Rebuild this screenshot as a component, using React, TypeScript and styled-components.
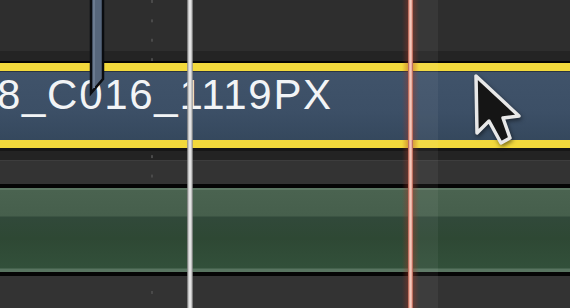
import React from "react";
import styled, { createGlobalStyle } from "styled-components";

const Global = createGlobalStyle`
  html, body { margin: 0; padding: 0; background: #2e2e2e; }
  body { font-family: "Liberation Sans", Arial, sans-serif; }
`;

const Timeline = styled.div`
  position: relative;
  width: 570px;
  height: 308px;
  overflow: hidden;
  display: flex;
  flex-direction: column;
  background: #2e2e2e;
`;

const Track = styled.div<{ $h: number; $bg: string; $dotOffset?: number }>`
  flex: 0 0 ${(p) => p.$h}px;
  background-color: ${(p) => p.$bg};
  ${(p) =>
    p.$dotOffset !== undefined
      ? `
    background-image: linear-gradient(to bottom, #4a4a4a 0 3px, transparent 3px);
    background-size: 2px 19.4px;
    background-repeat: repeat-y;
    background-position: 151px ${p.$dotOffset}px;
  `
      : ""}
`;

const Separator = styled.div<{ $h: number; $color?: string }>`
  flex: 0 0 ${(p) => p.$h}px;
  background: ${(p) => p.$color || "#050505"};
`;

const SelectedClip = styled.div`
  flex: 0 0 85px;
  box-sizing: border-box;
  border-top: 8px solid #f2d93c;
  border-bottom: 8px solid #f2d93c;
  background: linear-gradient(to bottom, #2a3442 0 1px, #40536a 1px, #3c4f66 60%, #35485d 100%);
  overflow: hidden;
  display: flex;
  align-items: flex-start;
`;

const ClipLabel = styled.span`
  margin-left: -3px;
  padding-top: 3px;
  font-family: "Liberation Sans", Arial, sans-serif;
  font-size: 42px;
  line-height: 42px;
  letter-spacing: 1.7px;
  color: #f2f4f6;
  white-space: nowrap;
`;

const AudioClip = styled.div`
  flex: 0 0 84px;
  background: linear-gradient(
    to bottom,
    #5c7763 0 2px,
    #4a6350 2px,
    #465f4c 28px,
    #31493a 29px,
    #2e4834 60%,
    #32503a 80px,
    #587460 81px,
    #587460 100%
  );
`;

const Skimmer = styled.div`
  position: absolute;
  top: 0;
  bottom: 0;
  left: 187px;
  width: 6px;
  background: linear-gradient(
    to right,
    rgba(120, 120, 120, 0.6) 0,
    #a0a0a0 1px,
    #e4e4e4 2px,
    #e4e4e4 4px,
    #a0a0a0 5px,
    rgba(120, 120, 120, 0.5) 6px
  );
`;

const PlayheadGlow = styled.div`
  position: absolute;
  top: 0;
  bottom: 0;
  left: 402px;
  width: 17px;
  background: linear-gradient(
    to right,
    rgba(170, 50, 30, 0) 0,
    rgba(170, 55, 35, 0.35) 6px,
    rgba(170, 55, 35, 0.35) 11px,
    rgba(170, 50, 30, 0) 17px
  );
`;

const Playhead = styled.div`
  position: absolute;
  top: 0;
  bottom: 0;
  left: 408px;
  width: 5px;
  background: linear-gradient(
    to right,
    #a8503e 0,
    #eab0a2 1.5px,
    #f4c8bc 2.5px,
    #eab0a2 3.5px,
    #a8503e 5px
  );
`;

const HighlightBand = styled.div`
  position: absolute;
  top: 0;
  bottom: 0;
  left: 413px;
  width: 25px;
  background: rgba(255, 255, 255, 0.05);
`;

const Connector = styled.svg`
  position: absolute;
  left: 86px;
  top: -4px;
  width: 22px;
  height: 104px;
`;

const Cursor = styled.svg`
  position: absolute;
  left: 468px;
  top: 70px;
  width: 58px;
  height: 82px;
  filter: drop-shadow(1px 2px 2px rgba(0, 0, 0, 0.5));
`;

export default function App() {
  return (
    <>
      <Global />
      <Timeline>
        <Track $h={51} $bg="#2e2e2e" $dotOffset={0} />
        <Track $h={10} $bg="#242424" $dotOffset={7.2} />
        <Separator $h={2} />
        <SelectedClip>
          <ClipLabel>8_C016_1119PX</ClipLabel>
        </SelectedClip>
        <Separator $h={3} $color="#161616" />
        <Track $h={9} $bg="#232323" $dotOffset={4.2} />
        <Separator $h={1} $color="#3d3d3d" />
        <Track $h={23} $bg="#333333" $dotOffset={13.6} />
        <Separator $h={4} />
        <AudioClip />
        <Separator $h={4} />
        <Track $h={32} $bg="#333333" $dotOffset={15} />

        <HighlightBand />
        <Skimmer />
        <PlayheadGlow />
        <Playhead />

        <Connector viewBox="0 0 22 104">
          <polygon
            points="5,0 17,0 17,83 5,97"
            fill="#56667c"
            stroke="#0a0c10"
            strokeWidth="2.5"
            strokeLinejoin="miter"
          />
          <line x1="8" y1="0" x2="8" y2="92" stroke="#6b7b91" strokeWidth="2" />
        </Connector>

        <Cursor viewBox="0 0 58 82">
          <path
            d="M8 6 L9 63 L21 51 L33 73 L42 68 L35 48 L51 46 Z"
            fill="#151515"
            stroke="#e8e8e8"
            strokeWidth="3.5"
            strokeLinejoin="round"
          />
        </Cursor>
      </Timeline>
    </>
  );
}
